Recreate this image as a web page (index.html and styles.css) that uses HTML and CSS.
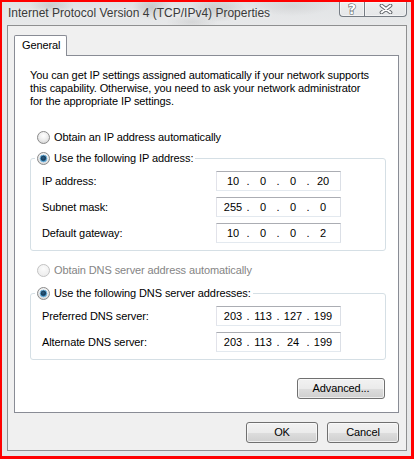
FILE: index.html
```html
<!DOCTYPE html>
<html lang="en">
<head>
<meta charset="utf-8">
<title>Internet Protocol Version 4 (TCP/IPv4) Properties</title>
<link rel="stylesheet" href="styles.css">
</head>
<body>
<svg class="defs" width="0" height="0" aria-hidden="true">
  <defs>
    <radialGradient id="radioFill" cx="50%" cy="35%" r="65%">
      <stop offset="0%" stop-color="#ffffff"/>
      <stop offset="60%" stop-color="#ececec"/>
      <stop offset="100%" stop-color="#d4d4d4"/>
    </radialGradient>
    <radialGradient id="radioOff" cx="50%" cy="35%" r="65%">
      <stop offset="0%" stop-color="#fbfbfb"/>
      <stop offset="100%" stop-color="#ececec"/>
    </radialGradient>
    <radialGradient id="radioDot" cx="45%" cy="40%" r="60%">
      <stop offset="0%" stop-color="#2b5f86"/>
      <stop offset="55%" stop-color="#173c5a"/>
      <stop offset="100%" stop-color="#4f9ccc"/>
    </radialGradient>
  </defs>
</svg>
<div class="window">
  <div class="titlebar">
    <span class="title">Internet Protocol Version 4 (TCP/IPv4) Properties</span>
    <div class="caption">
      <span class="cap-btn cap-help">?</span>
      <span class="cap-btn cap-close">
        <svg width="14" height="10" viewBox="0 0 14 10">
          <path d="M2.5 1.5 L11.5 8.5 M11.5 1.5 L2.5 8.5" stroke="#62666b" stroke-width="3.8" stroke-linecap="round" fill="none"/>
          <path d="M2.5 1.5 L11.5 8.5 M11.5 1.5 L2.5 8.5" stroke="#ffffff" stroke-width="1.9" stroke-linecap="round" fill="none"/>
        </svg>
      </span>
    </div>
  </div>
  <div class="client">
    <div class="tabs"><div class="tab">General</div></div>
    <div class="panel">
      <p class="intro">You can get IP settings assigned automatically if your network supports<br>this capability. Otherwise, you need to ask your network administrator<br>for the appropriate IP settings.</p>

      <div class="radio-row obtain-ip">
        <svg class="radio" viewBox="0 0 13 13"><circle cx="6.5" cy="6.5" r="6" fill="url(#radioFill)" stroke="#8b8b8b"/></svg>
        <span>Obtain an IP address automatically</span>
      </div>

      <fieldset class="group group-ip">
        <legend class="legend">
          <span class="legend-inner">
            <svg class="radio" viewBox="0 0 13 13"><circle cx="6.5" cy="6.5" r="6" fill="url(#radioFill)" stroke="#8b8b8b"/><circle cx="6.5" cy="6.5" r="3.4" fill="url(#radioDot)" stroke="#6fb3dc" stroke-width="0.9"/></svg>
            <span>Use the following IP address:</span>
          </span>
        </legend>
        <div class="fields">
          <span class="label">IP address:</span>
          <div class="ipbox"><span>10</span><span>.</span><span>0</span><span>.</span><span>0</span><span>.</span><span>20</span></div>
          <span class="label">Subnet mask:</span>
          <div class="ipbox"><span>255</span><span>.</span><span>0</span><span>.</span><span>0</span><span>.</span><span>0</span></div>
          <span class="label">Default gateway:</span>
          <div class="ipbox"><span>10</span><span>.</span><span>0</span><span>.</span><span>0</span><span>.</span><span>2</span></div>
        </div>
      </fieldset>

      <div class="radio-row obtain-dns disabled">
        <svg class="radio" viewBox="0 0 13 13"><circle cx="6.5" cy="6.5" r="6" fill="url(#radioOff)" stroke="#c2c2c2"/></svg>
        <span>Obtain DNS server address automatically</span>
      </div>

      <fieldset class="group group-dns">
        <legend class="legend">
          <span class="legend-inner">
            <svg class="radio" viewBox="0 0 13 13"><circle cx="6.5" cy="6.5" r="6" fill="url(#radioFill)" stroke="#8b8b8b"/><circle cx="6.5" cy="6.5" r="3.4" fill="url(#radioDot)" stroke="#6fb3dc" stroke-width="0.9"/></svg>
            <span>Use the following DNS server addresses:</span>
          </span>
        </legend>
        <div class="fields">
          <span class="label">Preferred DNS server:</span>
          <div class="ipbox"><span>203</span><span>.</span><span>113</span><span>.</span><span>127</span><span>.</span><span>199</span></div>
          <span class="label">Alternate DNS server:</span>
          <div class="ipbox"><span>203</span><span>.</span><span>113</span><span>.</span><span>24</span><span>.</span><span>199</span></div>
        </div>
      </fieldset>

      <div class="adv-row"><button class="btn btn-adv" type="button">Advanced...</button></div>
    </div>
    <div class="dialog-buttons">
      <button class="btn btn-dlg" type="button">OK</button>
      <button class="btn btn-dlg" type="button">Cancel</button>
    </div>
  </div>
</div>
</body>
</html>
```

FILE: styles.css
```css
html, body {
  margin: 0;
  padding: 0;
}

body {
  font-family: "Liberation Sans", Arial, sans-serif;
  font-size: 11px;
  letter-spacing: -0.1px;
  color: #000;
  background: #fff;
}

.defs {
  display: block;
  width: 0;
  height: 0;
  overflow: hidden;
}

.window {
  width: 414px;
  height: 459px;
  box-sizing: border-box;
  border-style: solid;
  border-color: #ff0000;
  border-width: 2px 3px 3px 2px;
  display: flex;
  flex-direction: column;
  background:
    radial-gradient(ellipse 22px 10px at 50px 4px, rgba(90, 90, 90, 0.18), rgba(90, 90, 90, 0)),
    radial-gradient(ellipse 20px 12px at 150px 6px, rgba(80, 80, 80, 0.22), rgba(80, 80, 80, 0)),
    radial-gradient(ellipse 30px 12px at 215px 8px, rgba(80, 80, 80, 0.2), rgba(80, 80, 80, 0)),
    radial-gradient(ellipse 26px 8px at 190px 20px, rgba(90, 90, 90, 0.12), rgba(90, 90, 90, 0)),
    radial-gradient(ellipse 40px 10px at 290px 4px, rgba(110, 110, 110, 0.12), rgba(110, 110, 110, 0)),
    linear-gradient(#e1e3e5, #e9eaeb 30px, #e6e7e8);
}

.titlebar {
  height: 23px;
  flex-shrink: 0;
  display: flex;
  align-items: flex-start;
}

.title {
  margin: 4px 0 0 6px;
  font-size: 12px;
  line-height: 15px;
  letter-spacing: 0;
  color: #3a3a3a;
  white-space: nowrap;
  text-shadow: 0 0 5px rgba(255, 255, 255, 0.9);
}

.caption {
  margin-left: auto;
  margin-right: 4px;
  display: flex;
}

.cap-btn {
  height: 15px;
  box-sizing: border-box;
  display: flex;
  align-items: center;
  justify-content: center;
  border: 1px solid #767c84;
  border-top: none;
  background: linear-gradient(rgba(255, 255, 255, 0.45), rgba(255, 255, 255, 0.2) 50%, rgba(230, 232, 235, 0.35));
  box-shadow: inset 0 0 0 1px rgba(255, 255, 255, 0.45);
}

.cap-help {
  width: 25px;
  border-right: none;
  border-bottom-left-radius: 4px;
  font-family: "DejaVu Sans", sans-serif;
  font-weight: bold;
  font-size: 14px;
  line-height: 15px;
  letter-spacing: 0;
  color: #ffffff;
  -webkit-text-stroke: 1.2px #5a5e63;
  paint-order: stroke fill;
}

.cap-close {
  width: 43px;
  border-bottom-right-radius: 4px;
}

.client {
  flex: 1;
  margin: 0 4px 5px 5px;
  border: 1px solid #8e8f90;
  background: #f0f0f0;
  padding: 9px 7px 7px 6px;
  display: flex;
  flex-direction: column;
}

.tabs {
  display: flex;
}

.tab {
  position: relative;
  z-index: 1;
  width: 53px;
  height: 21px;
  box-sizing: border-box;
  margin-bottom: -1px;
  border: 1px solid #898c95;
  border-bottom: none;
  border-radius: 2px 2px 0 0;
  background: #fff;
  padding: 0 0 2px 7px;
  line-height: 18px;
  white-space: nowrap;
}

.panel {
  border: 1px solid #898c95;
  background: #fff;
  padding: 13px 12px 13px 15px;
  display: flex;
  flex-direction: column;
}

.intro {
  margin: 0;
  line-height: 13px;
  white-space: nowrap;
}

.radio-row {
  display: flex;
  align-items: flex-start;
  height: 16px;
  line-height: 16px;
  padding-left: 7px;
  white-space: nowrap;
}

.radio {
  width: 13px;
  height: 13px;
  flex-shrink: 0;
  margin: 2px 4px 0 0;
}

.obtain-ip {
  margin-top: 21px;
}

.obtain-dns {
  margin-top: 11px;
}

.disabled {
  color: #858585;
}

.group {
  margin: 0;
  min-inline-size: 0;
  border: 1px solid #d5dfe5;
  border-radius: 3px;
  padding: 4px 0 7px 4px;
}

.group-ip {
  margin-top: 5px;
}

.group-dns {
  margin-top: 7px;
}

.legend {
  padding: 0 2px;
  line-height: 17px;
}

.legend-inner {
  display: flex;
  align-items: flex-start;
  height: 17px;
  white-space: nowrap;
}

.fields {
  display: grid;
  grid-template-columns: 174px 125px;
  row-gap: 6px;
  padding-left: 7px;
}

.label {
  line-height: 20px;
  white-space: nowrap;
}

.ipbox {
  height: 20px;
  box-sizing: border-box;
  border: 1px solid;
  border-color: #abadb3 #dbdfe6 #e3e9ef #e2e3ea;
  background: #fff;
  padding-left: 3px;
  display: grid;
  grid-template-columns: 26px 4px 26px 4px 26px 4px 26px;
  line-height: 18px;
  text-align: center;
  letter-spacing: 0;
}

.adv-row {
  display: flex;
  justify-content: flex-end;
  margin-top: 18px;
  padding-right: 1px;
}

.btn {
  font-family: inherit;
  font-size: 11px;
  letter-spacing: -0.1px;
  color: #000;
  height: 21px;
  box-sizing: border-box;
  padding: 0;
  border: 1px solid #707070;
  border-radius: 3px;
  background: linear-gradient(#f2f2f2 0%, #ebebeb 50%, #dddddd 51%, #cfcfcf 100%);
  box-shadow: inset 0 0 0 1px rgba(252, 252, 252, 0.7);
  line-height: 19px;
}

.btn-adv {
  width: 88px;
}

.dialog-buttons {
  display: flex;
  justify-content: flex-end;
  gap: 9px;
  margin-top: 9px;
}

.btn-dlg {
  width: 72px;
}
```
